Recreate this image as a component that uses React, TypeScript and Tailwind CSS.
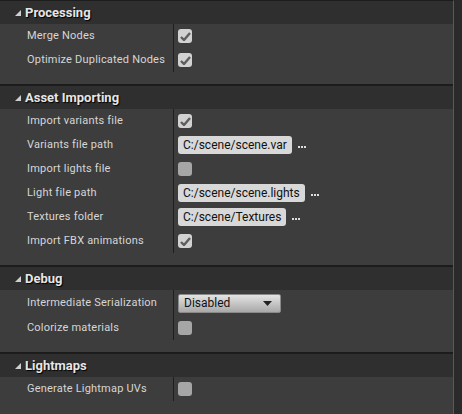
import React from 'react';

const font = { fontFamily: 'Roboto, "Noto Sans", sans-serif' };

function Check({ checked }: { checked: boolean }) {
  return (
    <div className={`w-[14px] h-[14px] rounded-[3px] flex items-center justify-center ${checked ? 'bg-[#d2d2d2]' : 'bg-[#a6a6a6]'}`}>
      {checked && (
        <svg width="11" height="9" viewBox="0 0 11 9">
          <path d="M1 5 L4 8 L10 1" stroke="#5e5e5e" strokeWidth="2.4" fill="none" />
        </svg>
      )}
    </div>
  );
}

function PathBox({ value }: { value: string }) {
  return (
    <div className="flex items-center gap-[6px]">
      <div className="h-[18px] px-[5px] rounded-[3px] bg-[#d8d8d8] text-[#111] text-[12px] leading-[18px]">{value}</div>
      <div className="flex gap-[1px] mt-[4px]">
        <span className="w-[2px] h-[2px] bg-[#ddd]" />
        <span className="w-[2px] h-[2px] bg-[#ddd]" />
        <span className="w-[2px] h-[2px] bg-[#ddd]" />
      </div>
    </div>
  );
}

function Dropdown() {
  return (
    <div className="w-[103px] h-[19px] rounded-[2px] border border-[#8a8a8a] bg-gradient-to-b from-[#e4e4e4] to-[#a9a9a9] flex items-center justify-between pl-[5px] pr-[8px] text-[12px] text-[#111]">
      <span>Disabled</span>
      <svg width="9" height="5" viewBox="0 0 9 5">
        <path d="M0 0 L9 0 L4.5 5 Z" fill="#222" />
      </svg>
    </div>
  );
}

type Row = { label: string; h?: number; control: React.ReactNode };

function Section({ title, rows, pb }: { title: string; rows: Row[]; pb: string }) {
  return (
    <div className="border-b-2 border-[#1c1c1c]">
      <div className="h-[23px] bg-[#2f2f2f] flex items-center pl-[15px] gap-[4px]">
        <svg width="6" height="6" viewBox="0 0 6 6">
          <path d="M6 0 L6 6 L0 6 Z" fill="#cfcfcf" />
        </svg>
        <span className="text-[13px] font-bold text-[#e6e6e6] [text-shadow:1px_1px_1px_#000]">{title}</span>
      </div>
      <div className={`bg-[#3d3d3d] flex ${pb}`}>
        <div className="w-[174px] border-r border-[#1e1e1e] flex flex-col">
          {rows.map((r) => (
            <div key={r.label} className="flex items-center pl-[27px] text-[11px] tracking-[0.2px] text-[#d6d6d6]" style={{ height: r.h ?? 24 }}>
              {r.label}
            </div>
          ))}
        </div>
        <div className="flex-1 flex flex-col pl-[4px]">
          {rows.map((r) => (
            <div key={r.label} className="flex items-center" style={{ height: r.h ?? 24 }}>
              {r.control}
            </div>
          ))}
        </div>
      </div>
    </div>
  );
}

export default function App() {
  return (
    <div className="w-[462px] h-[414px] bg-[#2a2a2a] overflow-hidden flex" style={font}>
      <div className="w-[454px] border-t border-[#1c1c1c] border-r border-r-[#5a5a5a]">
        <Section
          title="Processing"
          pb="pb-[12px]"
          rows={[
            { label: 'Merge Nodes', control: <Check checked /> },
            { label: 'Optimize Duplicated Nodes', control: <Check checked /> },
          ]}
        />
        <Section
          title="Asset Importing"
          pb="pb-[12px]"
          rows={[
            { label: 'Import variants file', control: <Check checked /> },
            { label: 'Variants file path', control: <PathBox value="C:/scene/scene.var" /> },
            { label: 'Import lights file', control: <Check checked={false} /> },
            { label: 'Light file path', control: <PathBox value="C:/scene/scene.lights" /> },
            { label: 'Textures folder', control: <PathBox value="C:/scene/Textures" /> },
            { label: 'Import FBX animations', control: <Check checked /> },
          ]}
        />
        <Section
          title="Debug"
          pb="pb-[12px]"
          rows={[
            { label: 'Intermediate Serialization', h: 26, control: <Dropdown /> },
            { label: 'Colorize materials', control: <Check checked={false} /> },
          ]}
        />
        <Section
          title="Lightmaps"
          pb="pb-[14px]"
          rows={[{ label: 'Generate Lightmap UVs', control: <Check checked={false} /> }]}
        />
      </div>
    </div>
  );
}
